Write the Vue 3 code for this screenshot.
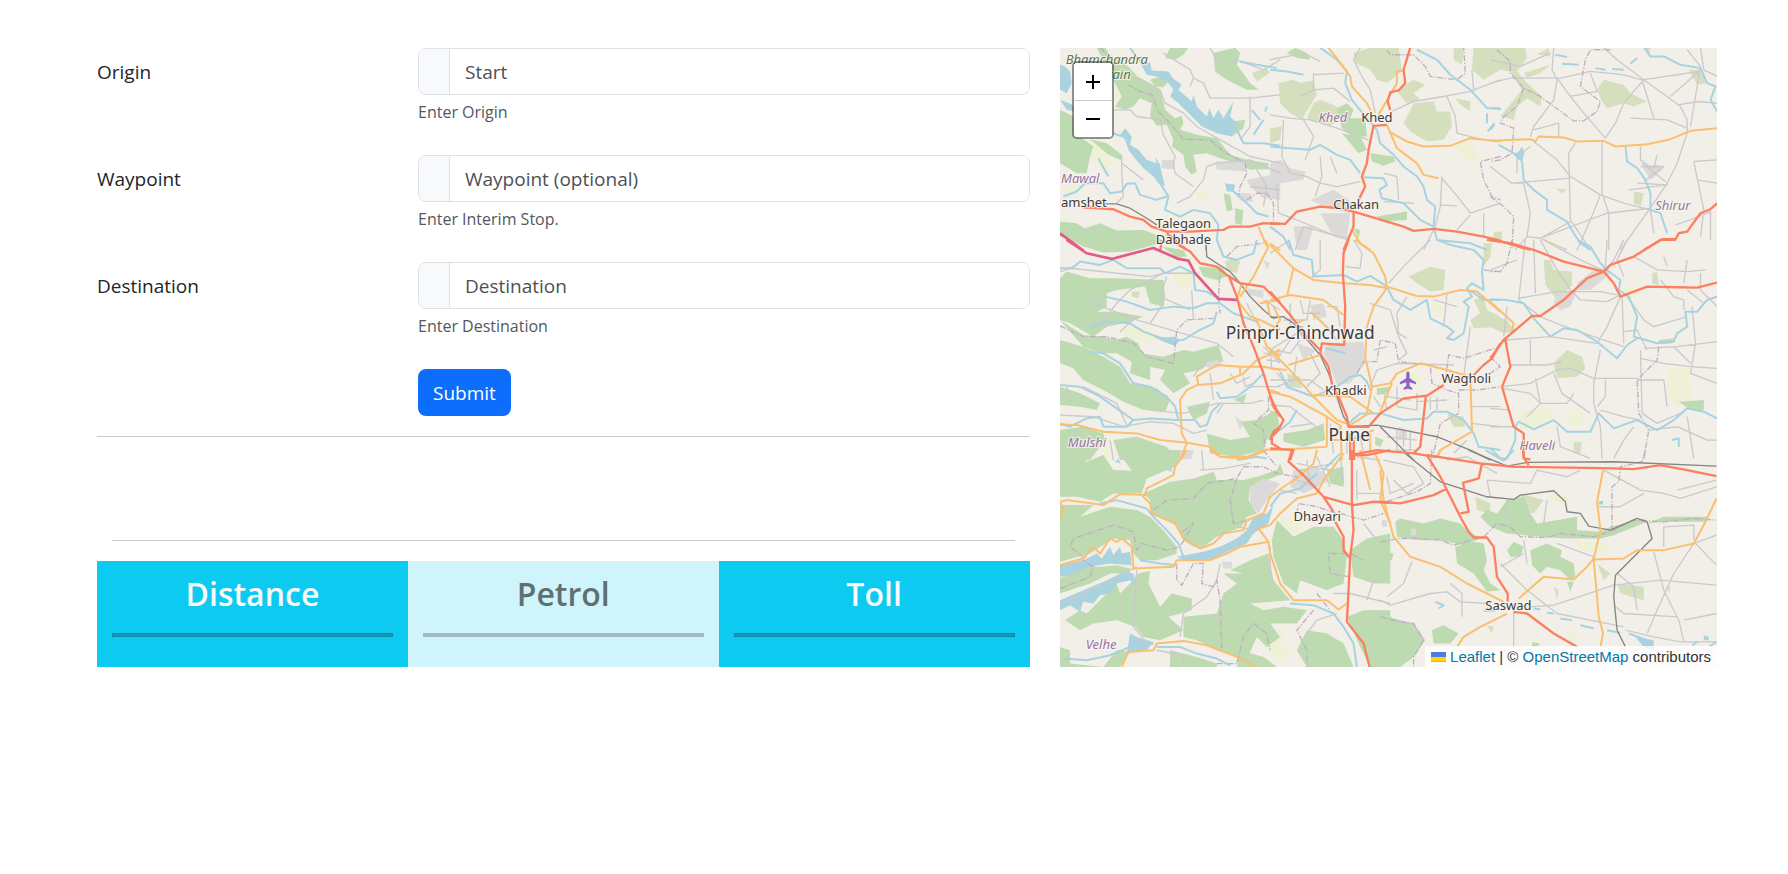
<script setup>
import { ref } from 'vue'

const fields = ref([
  { id: 'origin', label: 'Origin', placeholder: 'Start', help: 'Enter Origin', value: '' },
  { id: 'waypoint', label: 'Waypoint', placeholder: 'Waypoint (optional)', help: 'Enter Interim Stop.', value: '' },
  { id: 'destination', label: 'Destination', placeholder: 'Destination', help: 'Enter Destination', value: '' }
])

const stats = [
  { title: 'Distance', tone: 'strong' },
  { title: 'Petrol', tone: 'soft' },
  { title: 'Toll', tone: 'strong' }
]

// Drawing order of the map, bottom to top.
const layers = ['scrub', 'farm', 'wood', 'urban', 'lake', 'minor', 'boundary', 'river', 'rail', 'primary', 'trunk', 'motorway']

const tiles = [
  {
    x: -30, y: -24,
    wood: 'M140 24L165 24 180 45 235 80 262 110 300 130 330 150 345 210 375 235 395 228 400 250 390 270 440 285 500 295 520 320 540 345 590 360 655 370 655 388 600 390 560 370 510 355 470 340 430 345 440 395 425 405 405 380 400 345 365 320 370 300 350 255 320 258 300 230 305 190 270 175 250 200 225 210 195 200 215 170ZM490 40L555 24 570 40 560 75 600 130 625 150 590 150 530 120 495 95ZM345 55L360 24 415 24 400 45 375 60ZM30 210L70 230 72 290 100 298 130 320 120 350 110 400 80 400 30 370ZM120 298L170 310 215 345 215 362 175 345ZM30 545L80 550 105 565 150 550 200 572 280 570 320 585 340 610 260 620 200 615 150 630 60 600 30 590ZM520 460L540 465 548 510 530 515ZM555 505L580 510 575 555 555 550ZM550 245L585 240 580 265 545 290ZM300 120L330 110 355 125 340 142 315 140Z',
    scrub: 'M605 100L650 85 658 100 620 125ZM665 270L690 260 690 300Z',
    farm: 'M110 300L150 320 190 370 170 400 140 380 120 350ZM190 150L212 165 195 185ZM435 455L475 460 465 485 440 480ZM35 440L100 420 110 440 60 470Z',
    urban: 'M495 365L585 365 590 395 500 390ZM590 420L690 400 690 480 640 475 600 440ZM335 360L375 360 370 388 335 385ZM550 460L600 460 610 485 575 485Z',
    lake: 'M262 55L300 70 305 92 355 95 368 115 395 135 385 150 425 185 430 165 440 200 470 230 478 205 490 235 505 210 520 235 550 185 540 230 560 250 545 290 500 280 455 260 420 225 385 190 360 170 370 150 355 130 320 110 290 105ZM30 75L45 80 60 95 65 130 50 160 30 150ZM30 180L68 195 72 215 50 210ZM225 265L245 290 240 315 265 330 290 360 320 370 315 350 330 375 335 400 345 440 325 430 310 410 280 385 250 350 235 330 225 300 210 285ZM525 430L555 435 550 455 530 455Z',
    river: 'M240 24L262 55M190 280L215 290M555 260L580 310 640 310 690 318M40 470L80 455 105 430 160 430 180 460 215 455 230 432 255 430 270 465 320 480 350 470M330 430L355 470 345 510 390 530 430 510 480 520 505 555 500 600M530 440L570 470 620 520 655 530M570 65L620 75 680 85M605 210L630 240M650 200L645 215M610 285L640 240M145 355L175 410',
    trunk: 'M100 502L190 508 240 530 280 540 305 560 350 575 420 575 520 570 540 560 600 560 640 550 690 552M350 580L410 630',
    motorway: 'M30 580L100 632',
    primary: 'M625 560L650 620',
    rail: 'M160 492L200 492 240 505 290 535 320 555M468 610L468 630',
    boundary: 'M150 24L190 60M235 135L270 155 305 165 325 215 360 250 400 298 480 300 520 335 585 370 590 400 570 440 565 470M590 480L620 460 650 460 670 490 670 550',
    minor: 'M255 115L330 150 345 190 400 220 440 260 510 300 600 350 690 370M340 40L420 90 430 115 460 130 480 175 600 175 690 165M560 60L640 90 690 60M190 210L240 210 260 230 330 240 340 285 375 350 370 370 375 400 430 440M215 345L215 400 220 470 200 490M380 490L420 470 460 420 470 380 500 370 600 360 690 400M215 370L280 420M600 170L600 260 570 300M430 115L420 140M480 24L500 60 560 70M600 440L690 450M620 390L650 440 640 500'
  },
  {
    x: 630, y: -24,
    wood: 'M50 40L75 24 110 40 120 60 80 55ZM200 205L230 190 250 210 240 235 285 235 290 290 250 290 215 265ZM215 280L270 290 290 330 265 340ZM300 340L370 350 375 365 340 378 305 365ZM320 530L410 515 410 540 340 545ZM250 565L270 570 265 595Z',
    scrub: 'M25 130L70 120 90 130 130 122 140 165 115 205 95 240 60 220 30 190ZM110 235L130 190 150 180 200 200 215 230 180 260 130 245ZM250 40L300 24 385 24 395 95 350 130 320 120 300 90 255 70ZM380 155L430 120 465 135 430 160 450 180 410 190ZM400 250L430 190 490 185 500 215 540 215 545 260 520 300 470 305 420 275ZM550 24L580 24 575 75 550 60ZM610 24L690 24 690 90 640 120 605 90ZM555 175L600 185 600 215 570 195ZM0 265L35 260 30 300 0 310Z',
    farm: 'M550 320L600 300 620 340 630 370 590 360Z',
    urban: 'M0 370L30 360 60 385 105 395 100 420 30 430 20 470 0 480ZM120 480L190 450 250 490 240 520 160 500ZM150 520L240 520 230 600 190 590ZM70 560L130 560 110 630 80 630Z',
    river: 'M150 24L200 60 230 95 225 130 245 180 265 205 290 235 320 270 330 310 370 345 400 380 440 410 460 440 470 480 495 500 490 560M0 90L50 95 100 105M0 320L60 325 120 330 150 315 200 345 240 360 270 400M280 412L340 415 350 435 328 450 335 475 400 490 450 540 490 560 500 600 600 610 650 630M440 30L500 60 540 105 600 150 650 205 690 205M650 220L650 250M672 250L652 275M0 560L40 590 60 630',
    trunk: 'M420 24L400 90 405 130 385 152 360 158 352 185 360 210M350 255L310 258 295 330 290 370 275 410 285 440 265 480M250 515L250 560 220 630M0 550L45 552 80 515 150 500 210 505 250 515 300 530 400 560 430 573 490 567 560 575 640 590 690 602',
    primary: 'M175 24L215 75 240 110 245 140 290 190 305 220M400 92L380 95 380 130 325 225M350 255L365 290 380 325 440 370 460 405 505 415M355 275L410 305 460 320 540 318 600 295 690 305M245 570L270 610 300 630M0 610L30 632',
    boundary: 'M350 30L360 45 430 45 465 80 480 110 560 120 585 100 580 24M690 350L630 365 640 420 665 470 690 480',
    minor: 'M270 24L250 60 275 110 300 150 315 220M0 225L60 235 120 240 200 265 295 300M0 60L100 40 150 65M130 150L190 145 240 185M130 100L130 150 90 170M130 105L220 100M365 215L430 185 520 170 600 155 690 120M530 170L555 230 560 280 640 300M40 240L35 350 60 400 110 410 150 430 200 440 270 425M150 350L155 410 135 470M515 410L510 500 495 560 460 630M515 415L570 480 600 520 690 490M600 525L560 570M640 520L640 590M20 430L25 520 80 540 200 590M340 400L380 410 385 480M100 240L130 290 105 360M340 485L430 490M510 495L560 498M180 350L200 400M75 630L100 560 240 600M605 90L610 150'
  },
  {
    x: 1290, y: -24,
    scrub: 'M0 24L105 24 110 55 80 95 110 130 155 170 150 200 110 175 80 200 70 240 30 230 50 205 95 150 60 95 0 85ZM100 100L180 75 150 100 110 115ZM140 45L175 24 180 50ZM320 150L340 120 400 135 420 160 470 185 430 200 400 190 350 205 335 185ZM595 90L630 90 650 130 620 135ZM430 455L460 460 450 500 430 490ZM10 575L35 575 35 600 10 595ZM195 445L230 450 215 460ZM455 24L480 24 475 50Z',
    farm: 'M155 590L205 600 190 625 160 620Z',
    urban: 'M455 380L500 375 515 390 480 420Z',
    lake: 'M70 345L85 335 95 320 102 340 96 362 85 360Z',
    river: 'M25 315L80 345 95 365 100 420 130 450 170 480 170 510 230 545 250 580 270 610 300 630M465 24L480 50 520 50 570 75 630 85 650 130 675 140 660 180 680 215M405 320L410 365 440 385 465 420 480 460 480 510 510 520 530 580M315 85L345 90M365 88L400 90M420 72L440 55M5 205L32 208M0 270L12 255M195 45L230 52M215 72L265 75',
    primary: 'M0 303L120 298 135 305 145 290 220 293 260 305 340 303 375 320 470 313 540 298 600 273 680 265',
    trunk: 'M0 595L50 610 120 630M460 630L515 598 555 598 565 580 590 575 630 520 660 508 680 490',
    boundary: 'M20 30L60 65 60 100 100 145 150 170 190 200 250 243 280 243 320 215 330 185 270 140 285 60 300 30 360 30M100 145L80 200 40 230 30 250 70 265 65 340 30 360 0 365M0 470L40 500 70 530 65 630',
    minor: 'M190 24L185 90 200 120 190 180 160 220 130 260 120 290M0 130L60 115 210 115 300 95 400 105 455 120 560 105 625 95M340 24L380 60 460 120 530 170 570 200 590 240 590 280 560 370 530 430 490 490 440 560 390 630M460 120L400 190 375 250 345 295M200 115L240 170 280 220 345 295M240 170L320 155 300 100M455 120L470 170 490 235M590 30L630 80 610 200 600 260M540 170L625 95M565 195L620 185 680 190M420 235L530 240 590 265M130 305L200 360 240 410 330 465 400 490 480 510M255 310L235 340 240 540 300 630M335 305L335 460 355 520 355 630M60 430L240 415M330 465L300 540 260 630M0 380L65 430 100 430 120 520 110 590 75 630M150 595L350 520 480 505M110 590L150 595 240 545M150 595L230 630M680 360L610 365 640 510 630 590M680 430L620 420M450 380L520 380 460 425M455 370L525 425M490 385L500 345M440 430L530 435 415 450M130 270L205 250 205 290M480 510L490 580M555 555L600 540 660 515 660 600M450 320L450 360 485 385M630 24L640 90 680 110M80 400L80 350 120 320M0 60L90 80 180 40'
  },
  {
    x: -30, y: 576,
    wood: 'M60 0L330 0 310 15 240 35 160 38 100 20ZM30 115L50 95 120 115 200 115 340 120 345 170 340 200 300 190 285 140 200 150 170 160 170 200 140 215 200 215 280 230 240 245 170 260 130 290 60 250 30 240ZM30 240L100 285 160 290 200 300 230 290 265 310 275 340 340 350 400 330 430 335 505 315 520 365 480 370 450 390 400 400 420 430 370 460 330 420 345 390 300 380 300 420 240 400 245 365 200 340 150 340 100 320ZM30 300L100 320 160 350 210 380 240 430 320 445 360 480 345 515 280 510 220 485 160 450 100 420 70 385 30 370ZM30 440L90 460 150 490 140 510 90 500 30 495ZM30 570L100 560 160 580 165 600 120 660 30 660ZM190 600L260 590 350 620 380 660 210 660ZM445 80L520 85 530 110 500 120 460 110ZM410 500L480 485 470 520 430 540ZM470 580L540 600 600 590 570 545 620 540 680 510 690 570 650 600 640 630 560 650 480 640ZM550 480L590 460 580 490ZM335 20L400 30 410 50 380 52Z',
    scrub: 'M525 65L545 55 570 65 560 100 530 90ZM245 155L270 155 265 175 245 170Z',
    farm: 'M370 95L420 90 430 130 400 150 375 125ZM210 265L290 260 330 300 290 310 230 290ZM165 590L185 600 175 660 160 650Z',
    urban: 'M580 145L640 150 640 175 600 165ZM460 370L500 360 520 375 480 390ZM555 530L580 545 570 570ZM640 60L660 70 650 90Z',
    lake: 'M310 290L350 292 375 290 390 300 375 318 340 305Z',
    river: 'M30 85L65 85 90 65 150 75 190 60 230 85 330 85 345 100 390 80 430 100 435 150 470 155 510 180M165 170L230 185 300 210 370 200 430 205 470 190 510 190 550 220 620 245M120 265L170 245 240 250 280 275 350 300 400 300 440 275 490 250 500 215M120 335L160 340 210 370 250 430 300 440 350 470 375 500 385 540M30 435L90 440 150 470 200 505 250 540 300 535 380 540 435 540 450 560 470 555 485 515 510 490M500 455L510 475 560 470 600 440 640 400M30 550L60 560 110 535 150 530 160 560 230 560 250 540M500 0L520 50 560 60 610 40 620 0',
    trunk: 'M335 0L330 35M385 15L420 35 450 70 500 80 530 105 570 130 640 140 690 190M535 105L560 170 580 250 610 320 640 400 670 500 690 530M690 565L665 590 665 610 690 625',
    motorway: 'M50 0L110 40 185 57 310 24 385 57 415 62 435 100 505 177 560 180',
    primary: 'M30 553L80 555 160 575 260 580 330 600 410 608 480 620 510 650 580 655 640 630 690 625M410 608L395 580 390 480 410 450 440 435 510 430 570 405 570 380 500 375 440 410 445 435M570 380L640 380 690 390M575 130L560 180 600 230 630 240 690 270M575 405L620 360 690 330M410 610L390 660M645 0L655 20 630 70 610 110 570 170M620 240L650 320 690 350M630 190L690 180M650 180L660 230M660 450L690 460',
    rail: 'M468 15L470 50 500 70 540 95 570 130 600 170 640 210 670 235 690 230',
    boundary: 'M30 258L100 290 170 290 250 310 290 350 370 370 380 270 410 240 490 235M510 80L505 180 510 220M530 50L560 20 640 10M655 470L655 510 610 550 640 570 645 640',
    minor: 'M30 95L60 85 300 110 340 100 430 100M110 260L160 240 200 190 240 150 300 120 340 100M130 190L260 240 430 290 500 310 550 350M170 170L130 190M300 250L340 190M350 110L330 170 420 210M30 525L130 530 220 560 300 545 370 550 430 580 470 570M100 440L200 490 230 555M300 510L400 520 500 490 600 490 640 480M480 400L490 480M425 150L430 240M210 275L260 230M430 410L450 380 470 370M580 410L585 440 610 430M180 600L190 660M640 340L690 340M650 360L690 365M640 320L690 370M660 330L665 390M640 180L690 210M600 440L690 440M30 470L60 465 50 440M500 520L520 490M590 190L620 250M540 400L560 430 600 410'
  },
  {
    x: 630, y: 576,
    wood: 'M0 510L20 520 20 570 0 600ZM40 580L110 570 160 550 165 600 100 620 40 605ZM320 445L360 440 350 460 320 465ZM315 590L340 600 330 620 315 615Z',
    scrub: 'M415 110L480 80 525 90 520 150 480 155 440 130ZM610 180L640 170 650 210 690 230 690 260 610 265 600 240 630 220ZM530 520L580 530 585 560 550 560ZM640 10L665 10 660 50 640 80ZM50 400L90 410 95 445 60 440Z',
    farm: 'M485 180L520 200 515 230 490 230ZM415 390L455 410 450 440 420 430Z',
    urban: 'M170 310L280 305 285 370 240 430 200 435 180 380 160 340ZM120 195L160 190 170 230 130 240ZM385 560L410 570 410 600 385 600ZM80 310L140 330 100 360Z',
    river: 'M55 0L70 45 125 60 130 110 220 105 260 125 300 108 350 140 370 180 420 210 470 180 480 235 530 260 550 275 530 295 550 300 580 280 595 200 580 185 605 170 590 145 605 130 640 150 635 95 640 60 610 30 540 15 500 0M605 155L640 180 690 180M30 395L50 440 130 470 200 440 240 410 270 405 290 425 300 450M235 550L270 520 330 520 400 540 470 535 490 515 530 515 580 540 610 580 625 620 690 630M165 325L225 340M30 570L60 545 80 510',
    trunk: 'M235 0L220 40 218 100 225 200 222 315 155 310 150 340 175 380 185 430 205 470 230 530 235 560 295 560 330 520 400 475 470 467 520 435M0 155L60 225 110 290 150 330M610 405L640 375 665 355 690 310M467 467L450 620 430 640M0 470L20 510 40 540 30 560 10 575 0 600M0 625L70 630 60 660M240 580L240 660M250 600L252 660M240 645L320 630 430 640 480 648 500 650M650 0L690 5',
    primary: 'M0 15L70 85 130 120 220 130 300 135 350 145M255 0L310 40 345 110 350 145 310 200 290 260 285 350 305 440 290 520M350 140L440 168 490 170 570 150 620 155 690 215M0 180L60 165 160 180 220 225M120 215L180 270M70 85L50 170M0 330L50 380 130 470 200 540 240 555M55 375L150 345M0 455L60 470 170 530 215 560M100 240L80 250 100 300M130 465L240 470 310 520M305 440L360 430 380 400 450 370 530 390 600 410 605 575 510 630 500 650M365 430L330 515M170 530L170 620M210 560L215 660M0 385L50 390M0 630L90 625 170 620M300 580L300 640M240 555L295 520M10 200L30 240 0 280M180 600L240 600 310 570',
    rail: 'M0 232L40 230 70 250 120 310 150 345 175 400 200 470 220 530 240 560M240 560L320 555 400 570 500 590 600 630 660 660M330 560L380 610 430 660',
    boundary: 'M690 95L640 90M260 400L280 365 320 365 330 300 375 310 385 365 480 375 485 430 530 450 565 460 565 520 510 550 490 640M525 420L535 345 580 355 690 320M565 450L620 450 690 440',
    minor: 'M150 0L150 90 125 110M225 80L270 85 275 40 250 0M480 0L400 80 355 130M300 190L360 210 385 290 410 340 385 360M410 170L380 220 385 280 410 295M530 160L520 260M600 260L580 410M310 330L350 320M0 40L60 0M60 190L60 260 100 260M40 240L110 240 120 180M690 500L605 500M690 560L605 550M300 440L320 390 380 370 550 375M380 440L380 500 440 510 440 460M350 470L420 480M380 570L380 630 440 630M400 570L400 620M420 570L420 630M350 590L440 600M0 330L80 280M20 360L60 300M0 420L120 420 160 450M20 440L70 420 80 350M120 340L150 400 110 440M60 560L130 550M480 470L480 510M500 470L500 510M440 485L530 480M550 640L590 600M0 495L60 500 150 570M20 400L60 440M90 300L60 340 20 330M170 200L200 200 210 260M90 180L100 220 150 220M490 180L560 200M150 240L200 300M340 450L350 510M310 470L330 500M180 550L190 640M230 600L230 640M270 590L280 640'
  },
  {
    x: 1290, y: 576,
    wood: 'M565 485L640 480 640 510 600 510ZM505 300L550 295 545 310 505 312Z',
    scrub: 'M160 60L180 60 190 90 245 95 245 135 200 180 165 135ZM190 370L230 330 275 350 285 385 260 410 200 415ZM0 225L50 240 75 275 40 280 0 260ZM485 100L500 95 505 135 485 130ZM250 605L275 605 270 640 250 640Z',
    farm: 'M530 385L600 385 595 420 610 480 560 500 530 470ZM80 520L160 500 200 520 170 560 90 570ZM235 520L260 500 285 530 270 560 240 560ZM395 140L440 140 435 180 400 170ZM110 250L160 250 170 280 130 270ZM150 0L200 0 190 20Z',
    urban: 'M260 130L310 90 350 80 360 100 300 150 260 150ZM200 160L260 150 240 200 210 210 190 190Z',
    river: 'M260 0L300 20 330 70 350 90 390 120 385 150 415 170 440 230 430 290 500 310 550 305 560 280 590 260 585 215 620 215 650 180 680 170M0 178L50 180 100 190 130 235 180 290 220 265 260 270 320 305 380 355 410 315 440 295M0 625L30 655 50 655 75 600 75 560 85 545 130 568 190 540 230 575 300 575 325 520 370 565 440 540 500 570 550 540 590 505 640 515 680 535M545 600L565 595 565 620',
    trunk: 'M0 0L60 10 130 30 220 65 340 95 370 130 390 170 470 140 560 142 620 143 680 128M340 95L360 75 430 50 510 0 555 0M340 95L290 115 220 180 150 228 125 228 40 300 0 355M45 300L60 380 35 440 70 560 100 580 100 655 120 658',
    primary: 'M0 185L70 250 65 275',
    boundary: 'M65 0L50 70 30 95 0 95M0 350L30 380 0 400M505 320L500 360 440 420 445 520 475 570 460 655',
    minor: 'M105 0L85 180M130 0L135 160M150 0L200 90 240 150 270 180 350 185 390 165M85 175L200 155 330 155 380 165M350 0L345 80M400 0L370 60 345 95M410 0L380 60 400 110M430 50L500 90 590 95 645 90M590 60L580 130M520 50L530 80M85 180L150 230 210 255 310 290 400 320M50 200L40 290M45 300L180 290 320 310M390 170L350 260 320 310M395 170L400 310M410 170L460 240 490 260 590 230M400 275L440 270 470 330M460 325L560 320 680 305M605 200L615 310 600 400 680 430M590 150L640 190M450 355L520 370 600 380 680 385M60 375L170 375 215 365M35 440L120 430 200 390 240 385 310 415 440 415M330 330L310 430 310 490 330 560 335 655M345 420L345 470 320 500M440 420L520 420 530 500M35 445L120 460 150 490 230 490 250 460M190 400L215 460 300 520M0 505L60 510M0 560L70 560M120 300L120 375M135 415L150 490 110 530M450 330L455 520 500 550 570 520M590 530L610 655M330 510L400 530 450 540M430 560L400 600 370 655M200 560L210 620 300 655M475 570L560 560 650 600 680 600M550 320L600 370M510 120L550 170 580 180 580 210M630 100L630 150 680 200M160 0L270 60 345 95M0 90L80 60'
  },
  {
    x: -30, y: 1206,
    wood: 'M30 0L90 0 110 35 160 15 190 60 245 62 200 0 400 0 375 50 290 85 275 130 190 130 150 155 80 140 30 140ZM280 130L360 95 430 85 490 65 500 90 580 90 620 80 680 60 690 40 700 70 650 90 600 110 595 150 620 190 590 200 575 230 500 260 460 290 430 290 400 270 385 230 340 205 305 190 300 150ZM30 165L130 165 90 200 180 170 260 180 300 200 340 240 380 290 380 310 320 330 270 330 250 310 240 270 190 265 120 310 30 335ZM30 385L100 350 150 350 200 345 240 355 240 370 180 370 120 400 30 430ZM265 370L300 362 295 400 330 470 365 430 425 445 425 480 355 500 400 540 330 570 280 560 255 530 200 510 130 520 90 540 60 520 45 510 90 480 110 490 200 400 210 430 240 400ZM400 500L500 490 520 430 560 400 520 370 580 370 540 360 600 330 655 310 670 390 720 450 600 460 640 480 700 470 770 480 740 520 660 520 690 560 650 590 620 560 580 650 560 620 500 600 440 570 400 560ZM680 210L730 260 790 230 850 230 880 270 890 320 880 400 830 420 750 390 740 430 700 400 670 320 665 270ZM900 300L950 265 1020 250 1020 400 970 400 910 380ZM890 500L940 480 1020 480 1020 650 960 650 930 590ZM770 540L830 550 880 580 910 650 770 650 740 600ZM360 600L440 620 500 640 500 650 360 650ZM570 600L640 620 680 650 560 650ZM30 590L60 600 60 640 160 650 30 650ZM830 60L880 50 880 110 840 100ZM200 600L240 605 210 650 160 650Z',
    farm: 'M690 200L760 220 750 250 700 240ZM600 470L650 460 640 490ZM660 550L710 530 690 580 740 600 690 640 640 590ZM90 5L130 0 110 30Z',
    urban: 'M600 110L640 85 690 100 650 150 625 190 600 160ZM730 60L800 50 840 90 760 130 720 110ZM515 335L545 335 545 355 520 355ZM390 0L430 0 425 25 390 30Z',
    lake: 'M30 345L100 330 140 310 155 325 180 290 190 315 210 290 215 310 240 305 245 345 180 340 120 350 60 375 30 380ZM30 450L100 420 170 390 220 365 250 370 260 410 240 390 200 400 180 430 150 435 130 460 100 455 90 485 60 465 30 480ZM380 320L460 305 510 290 560 265 590 240 610 200 650 190 670 165 655 220 610 250 590 280 540 300 480 330 400 330ZM240 550L260 560 310 575 290 600 230 610ZM350 60L365 52 365 66ZM195 35L205 25 212 40Z',
    river: 'M40 625L110 630 180 615 240 590 310 580M320 590L390 590 440 610 500 625 540 645M150 160L200 150 290 175 310 200 350 240 385 280 400 320M720 460L790 465 850 490 880 530 910 580 920 650M270 330L330 340 380 345M660 170L690 130 750 115 800 70M560 30L620 20 650 25M870 10L820 60',
    trunk: 'M725 0L715 35 760 75 820 140 850 185M820 140L910 165 970 155 1020 158M855 215L880 260 880 300 900 325M905 0L905 160 910 240 900 320 895 420 890 515 940 580 958 650M900 15L950 15 1020 0',
    primary: 'M410 0L375 50 370 75 290 115 285 135 210 132 160 165 50 150 30 155 40 175 30 205M275 135L300 160 305 190 375 220 400 265 450 295 490 280 520 250 580 240 590 210 640 190 660 140 700 110 740 85 790 40 800 0M30 345L100 325 130 290 150 310 180 265 200 275 215 265 245 290 250 355 370 350 380 330 480 330 530 310 570 290 655 275 660 310 690 400 730 450 830 450 865 478 890 460M655 275L625 235 660 225 690 190 740 145 800 130 820 90 880 10M215 650L235 605 310 600 320 580 400 572 470 585 560 620 620 650M480 0L510 20 600 20 650 0M930 0L960 120M970 0L1000 70 990 150 1020 220',
    boundary: 'M310 180L350 150 430 145 470 100 560 85 580 50 640 50 680 70 740 80M560 85L540 150 550 220 600 210M105 325L60 290 70 265 190 225 250 245 260 300 275 280 350 300 390 290 430 220 390 250M30 415L120 380 130 350 90 325M380 340L380 390 395 405 430 340 460 340 455 400 490 410 500 390 510 450 515 600M500 640L560 640 580 560 610 520 650 550 660 600M740 190L745 160 800 170 860 190M900 380L840 370 835 310 900 310 940 330M870 190L940 210 1000 190M790 480L740 540 770 600 770 650M800 430L840 480M640 0L680 50',
    minor: 'M450 60L520 55 600 40M455 0L460 60M30 460L80 440 160 400 260 350M260 360L250 530 300 590M510 340L500 390 470 440 400 490 390 560M660 290L660 370M320 600L400 615 400 650M850 430L900 430 1020 460M860 490L800 510 770 550M920 130L990 130M920 60L920 150M940 220L980 270M740 40L840 60M750 60L850 40M770 30L780 110M800 20L840 110M950 450L970 390M740 90L800 110M870 20L880 100M920 20L990 30M620 240L560 230M690 120L740 130'
  },
  {
    x: 960, y: 1206,
    wood: 'M45 215L60 205 130 220 180 205 240 220 260 240 300 265 250 285 180 270 120 270 50 260ZM300 200L320 180 350 190 380 150 430 140 450 190 470 220 590 200 590 240 660 245 690 230 790 205 800 215 700 255 660 265 560 265 480 260 380 250 330 230ZM225 290L280 275 310 280 320 330 310 360 330 400 360 420 320 425 280 370 230 340ZM380 300L400 275 430 290 420 320 390 320ZM450 300L500 280 545 300 540 320 580 340 585 380 570 390 540 360 500 350 480 370 455 345ZM0 480L40 505 100 520 135 570 100 620 60 650 0 650ZM155 540L190 525 235 550 210 580 160 580ZM0 300L40 310 35 330 0 330ZM800 220L850 200 980 200 980 215 850 215ZM560 395L580 395 570 425ZM455 575L480 580 470 590 455 590Z',
    scrub: 'M285 140L330 160 330 190 290 180ZM420 130L490 150 460 190 430 180ZM710 400L790 410 790 450 720 430ZM650 340L690 370 670 390ZM520 410L535 420 530 450ZM860 405L870 410 865 430ZM320 525L340 530 335 550Z',
    farm: 'M580 270L680 280 680 310 600 300ZM500 120L560 140 560 170 510 150ZM555 545L600 550 570 580Z',
    urban: 'M92 235L108 235 108 255 92 255ZM5 210L20 210 20 230 5 230Z',
    lake: 'M765 560L820 570 820 600 790 590ZM970 555L985 560 985 570 970 570ZM655 153L668 153 668 163 655 163Z',
    river: 'M315 0L370 32 400 0M460 475L480 478M500 488L520 490M540 505L575 510M600 525L640 535M680 540L720 548M745 550L800 570M310 482L345 482M165 455L190 465 175 475M935 585L950 575M985 590L1008 575',
    trunk: 'M140 15L300 40 400 50 700 55 760 57 840 45 920 60 1008 78M140 15L180 80 240 200 265 245 280 262 320 262 340 290 350 380 382 430 382 455M0 155L60 160 160 135 200 115M305 40L295 85 248 98 265 185 240 190M428 0L430 22 445 45M400 485L440 490 520 550 590 590',
    primary: 'M0 60L10 150 40 260 90 320 180 350 260 400 370 455M180 0L175 15M415 445L490 380 580 388 620 350 640 325 660 240 650 155 668 60M640 328L730 325 770 300 850 300 940 280 975 215 1008 145M640 330L655 500 668 550 660 590M380 490L300 530 250 560 230 590',
    rail: 'M265 0L380 48 440 37 700 35 1008 48M75 10L180 95 320 140 400 148 420 135 520 122 555 155 560 185 600 190 625 228 690 240 770 205 800 215 815 265 705 375 700 440 710 540 735 590',
    boundary: 'M795 0L785 35 720 50 715 95 695 110 695 240M0 275L60 265 110 265 180 270 220 285 310 260 350 220 390 230 420 260 500 262 540 250 640 260 700 240 760 210 850 215 940 205 1008 210M155 0L150 100 110 125 0 160M0 500L60 515 100 520 130 570 100 620 100 650',
    minor: 'M0 450L30 465 150 430 200 425 240 455 320 460M450 470L520 465 580 445 700 405 840 390 1008 405M95 335L70 400 20 440M210 400L245 430 245 500M360 340L440 420 530 490 730 530M530 280L640 320M820 305L850 420 895 510 910 575M940 280L880 370 830 480 800 550M945 280L1008 345M940 280L1008 255M320 90L450 100 470 60 560 80 600 60M320 90L330 140M500 150L490 220M670 60L780 120 850 130 900 145 1008 110M790 130L720 170 655 170M890 120L1008 90M100 100L30 130 20 80M10 30L100 50 130 100 80 130 40 90M360 350L430 310M400 480L400 590M700 465L730 490 890 500M910 510L1008 490M850 290L850 230 940 225 940 270M710 370L760 410 770 480M735 540L820 560 900 575 1008 575M430 270L440 340M200 30L260 20 350 70M380 150L370 200'
  }
]

const places = [
  { name: 'Bhamchandra', x: 17, y: 48, kind: 'nature', anchor: 'start' },
  { name: 'Mountain', x: 212, y: 94, kind: 'nature', anchor: 'end' },
  { name: 'Khed', x: 818, y: 222, kind: 'district' },
  { name: 'Khed', x: 950, y: 222, kind: 'town' },
  { name: 'Mawal', x: 3, y: 405, kind: 'district', anchor: 'start' },
  { name: 'amshet', x: 3, y: 477, kind: 'town', anchor: 'start' },
  { name: 'Talegaon', x: 370, y: 540, kind: 'town' },
  { name: 'Dabhade', x: 370, y: 588, kind: 'town' },
  { name: 'Chakan', x: 888, y: 483, kind: 'town' },
  { name: 'Shirur', x: 1837, y: 486, kind: 'district' },
  { name: 'Pimpri-Chinchwad', x: 720, y: 873, kind: 'city' },
  { name: 'Wagholi', x: 1218, y: 1005, kind: 'town' },
  { name: 'Khadki', x: 857, y: 1041, kind: 'town' },
  { name: 'Pune', x: 867, y: 1179, kind: 'city' },
  { name: 'Haveli', x: 1431, y: 1206, kind: 'district' },
  { name: 'Mulshi', x: 81, y: 1197, kind: 'district' },
  { name: 'Dhayari', x: 771, y: 1419, kind: 'town' },
  { name: 'Saswad', x: 1344, y: 1686, kind: 'town' },
  { name: 'Velhe', x: 123, y: 1803, kind: 'district' }
]
</script>

<template>
  <main class="page">
    <section class="planner">
      <form @submit.prevent>
        <div v-for="f in fields" :key="f.id" class="row">
          <label :for="f.id" class="row-label">{{ f.label }}</label>
          <div class="row-body">
            <div class="group">
              <span class="addon"></span>
              <input :id="f.id" v-model="f.value" class="control" type="text" :placeholder="f.placeholder" :aria-describedby="f.id + '-help'">
            </div>
            <p :id="f.id + '-help'" class="help">{{ f.help }}</p>
          </div>
        </div>
        <div class="actions">
          <button type="submit" class="submit">Submit</button>
        </div>
      </form>
      <hr class="rule">
      <div class="result">
        <hr class="rule">
      </div>
      <div class="stats">
        <div v-for="s in stats" :key="s.title" class="stat" :class="s.tone">
          <h2 class="stat-title">{{ s.title }}</h2>
          <hr class="bar">
        </div>
      </div>
    </section>

    <section class="map" aria-label="Map">
      <svg class="map-canvas" viewBox="0 0 1971 1857" preserveAspectRatio="xMidYMid slice">
        <g v-for="layer in layers" :key="layer" :class="layer">
          <template v-for="(t, i) in tiles" :key="i">
            <path v-if="t[layer]" :d="t[layer]" :transform="`translate(${t.x} ${t.y})`" />
          </template>
        </g>
        <path class="plane" d="M1043 970q5 1 5 9v12l19 12v6l-19-6v11l8 6v5l-13-3-13 3v-5l8-6v-11l-19 6v-6l19-12v-12q0-8 5-9z" />
        <text v-for="(p, i) in places" :key="i" :x="p.x" :y="p.y" :text-anchor="p.anchor || 'middle'" :class="['place', p.kind]">{{ p.name }}</text>
      </svg>
      <div class="zoom">
        <button type="button" class="zoom-button" aria-label="Zoom in">
          <svg width="16" height="16" viewBox="0 0 16 16"><path d="M8 1v14M1 8h14" stroke="#000" stroke-width="2" /></svg>
        </button>
        <button type="button" class="zoom-button" aria-label="Zoom out">
          <svg width="16" height="16" viewBox="0 0 16 16"><path d="M1 8h14" stroke="#000" stroke-width="2" /></svg>
        </button>
      </div>
      <div class="credit">
        <a href="#leaflet"><svg class="flag" width="15" height="10" viewBox="0 0 15 10"><path fill="#4c7be1" d="M0 0h15v5H0z" /><path fill="#ffd500" d="M0 5h15v4H0z" /><path fill="#e0bc00" d="M0 9h15v1H0z" /></svg> Leaflet</a>
        | © <a href="#osm">OpenStreetMap</a> contributors
      </div>
    </section>
  </main>
</template>

<style>
body {
  margin: 0;
  background: #fff;
}
</style>

<style scoped>
.page {
  display: grid;
  grid-template-columns: 7fr 5fr;
  padding: 48px 56px 48px 82px;
  color: #212529;
  font: 400 19px/30px "Open Sans", "Noto Sans", sans-serif;
}

.planner {
  min-width: 0;
  padding: 0 15px;
}

.row {
  display: grid;
  grid-template-columns: 321px 1fr;
  min-height: 107px;
}

.row-label {
  padding-top: 9px;
}

.group {
  display: flex;
  height: 47px;
  box-sizing: border-box;
  border: 1px solid #dee2e6;
  border-radius: 8px;
  overflow: hidden;
}

.addon {
  width: 30px;
  border-right: 1px solid #dee2e6;
  background: #f8f9fa;
}

.control {
  flex: 1;
  min-width: 0;
  padding: 0 15px;
  border: 0;
  outline: 0;
  background: #fff;
  color: #212529;
  font: inherit;
}

.control::placeholder {
  color: #4c5054;
  opacity: 1;
}

.help {
  margin: 4px 0 0;
  color: #53585d;
  font-size: 16px;
  line-height: 26px;
}

.actions {
  padding-left: 321px;
}

.submit {
  display: block;
  height: 47px;
  padding: 0 15px;
  border: 0;
  border-radius: 8px;
  background: #0d6efd;
  color: #fff;
  font: inherit;
}

.rule {
  height: 1px;
  margin: 20px 0;
  border: 0;
  background: #c8c9ca;
}

.result {
  padding: 63px 15px 0;
}

.stats {
  display: grid;
  grid-template-columns: repeat(3, 1fr);
}

.stat {
  padding: 10px 15px 30px;
}

.strong {
  background: #0dcaf0;
  color: #f8f9fa;
}

.soft {
  background: #cff4fc;
  color: #5f6f72;
}

.stat-title {
  margin: 0 0 16px;
  font-size: 32px;
  font-weight: 600;
  line-height: 46px;
  text-align: center;
}

.bar {
  height: 2px;
  margin: 0;
  border: 1px solid #1287a3;
  background: #129bbd;
}

.soft .bar {
  border-color: #a1bcc3;
  background: #a1bcc3;
}

.map {
  position: relative;
  margin: 0 15px;
  overflow: hidden;
  background: #f2efe9;
}

.map-canvas {
  position: absolute;
  inset: 0;
  width: 100%;
  height: 100%;
  fill: none;
  stroke-linejoin: round;
}

.scrub { fill: #d5dfbe; }
.farm { fill: #eff1d7; }
.wood { fill: #bddab1; }
.urban { fill: #dbdad9; }
.lake { fill: #aad3df; }
.minor { stroke: #cac9cc; stroke-width: 4; }
.boundary { stroke: #bfaec2; stroke-width: 4; stroke-dasharray: 18 5 4 5; }
.river { stroke: #a6d2e2; stroke-width: 6; }
.rail { stroke: #858585; stroke-width: 4; }
.primary { stroke: #fabf70; stroke-width: 6; }
.trunk { stroke: #fa8060; stroke-width: 7; }
.motorway { stroke: #e35b84; stroke-width: 8; }
.plane { fill: #8b61c4; }

.place {
  fill: #3c3c3c;
  stroke: #f8f6f2;
  stroke-width: 7;
  stroke-opacity: 0.75;
  paint-order: stroke;
  font-family: "Noto Sans", sans-serif;
  font-size: 39px;
}

.place.city {
  font-size: 52px;
}

.place.district {
  fill: #9a74a3;
  font-style: italic;
}

.place.nature {
  fill: #5c7752;
  font-style: italic;
}

.zoom {
  position: absolute;
  top: 13px;
  left: 12px;
  border: 2px solid rgba(0, 0, 0, 0.4);
  border-radius: 5px;
  background-clip: padding-box;
  overflow: hidden;
}

.zoom-button {
  display: flex;
  align-items: center;
  justify-content: center;
  width: 38px;
  height: 37px;
  padding: 0;
  border: 0;
  background: #fff;
}

.zoom-button + .zoom-button {
  border-top: 1px solid #ccc;
}

.credit {
  position: absolute;
  right: 0;
  bottom: 0;
  padding: 0 6px;
  background: rgba(255, 255, 255, 0.8);
  color: #333;
  font: 15px/21px "Liberation Sans", Arial, sans-serif;
  white-space: nowrap;
}

.credit a {
  color: #0078a8;
  text-decoration: none;
}
</style>
